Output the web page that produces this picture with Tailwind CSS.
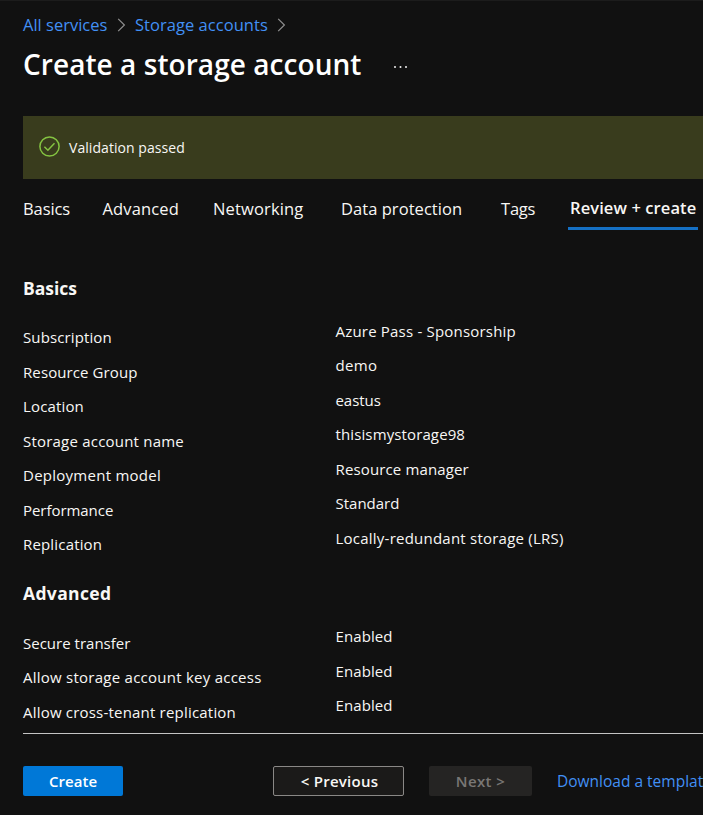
<!DOCTYPE html>
<html lang="en">
<head>
<meta charset="utf-8">
<title>Create a storage account</title>
<script src="https://cdn.jsdelivr.net/npm/@tailwindcss/browser@4"></script>
</head>
<body class="h-[815px] w-[703px] overflow-hidden border-t border-[#1c1c1c] bg-[#111111] font-['Open_Sans','Noto_Sans',sans-serif] text-[15px] text-[#f8f7f5] whitespace-nowrap">
<div class="flex h-[814px] flex-col pl-[23px]">

  <!-- Breadcrumb -->
  <nav class="mt-[11px] flex h-[25px] items-center text-[16.5px] leading-[25px] tracking-[0px] text-[#4290f5]">
    <a class="w-[94px]">All services</a>
    <svg class="w-[9px]" width="9" height="14" viewBox="0 0 9 14" fill="none" stroke="#8f8f8f" stroke-width="1.2"><path d="M1.2 .8 7.4 7 1.2 13.2"/></svg>
    <a class="w-[151px] pl-[9px] tracking-[0.04px]">Storage accounts</a>
    <svg class="w-[9px]" width="9" height="14" viewBox="0 0 9 14" fill="none" stroke="#8f8f8f" stroke-width="1.2"><path d="M1.2 .8 7.4 7 1.2 13.2"/></svg>
  </nav>

  <!-- Title -->
  <header class="mt-[7px] flex h-[40px] items-center">
    <h1 class="w-[370px] text-[28px] leading-[40px] font-semibold tracking-[0.06px] text-white">Create a storage account</h1>
    <svg width="15" height="4" viewBox="0 0 15 4" class="mt-[5px]" fill="#f0f0f0"><circle cx="2" cy="2" r="1"/><circle cx="7.5" cy="2" r="1"/><circle cx="13" cy="2" r="1"/></svg>
  </header>

  <!-- Validation banner -->
  <div class="mt-[32px] flex h-[63px] items-center bg-[#393c1d] pl-[16px]">
    <svg class="mb-[2px]" width="21" height="21" viewBox="0 0 21 21" fill="none" stroke="#84c341" stroke-width="1.5"><circle cx="10.5" cy="10.5" r="9.6"/><path d="M5.4 10.8 8.9 14.2 15.5 7.2"/></svg>
    <span class="ml-[9px] text-[14px] leading-[20px] tracking-[0.06px]">Validation passed</span>
  </div>

  <!-- Tabs -->
  <div class="flex h-[51px] text-[16.5px] leading-[24px]">
    <span class="mt-[18px] w-[79.5px] tracking-[-0.1px]">Basics</span>
    <span class="mt-[18px] w-[110.5px] tracking-[0.15px]">Advanced</span>
    <span class="mt-[18px] w-[128px] tracking-[0.15px]">Networking</span>
    <span class="mt-[18px] w-[160px] tracking-[0.05px]">Data protection</span>
    <span class="mt-[18px] w-[67px] tracking-[-0.2px]">Tags</span>
    <span class="w-[130px] border-b-[3px] border-[#1570c4] pt-[17px] pl-[2px] font-semibold tracking-[0.1px]">Review + create</span>
  </div>

  <!-- Summary: Basics -->
  <h2 class="mt-[46px] h-[24px] text-[17.5px] leading-[24px] font-bold">Basics</h2>
  <div class="mt-[14px] flex h-[242px] leading-[34.5px]">
    <dl class="w-[312px] pt-[6px]">
      <dt class="tracking-[0.12px]">Subscription</dt>
      <dt class="tracking-[0.1px]">Resource Group</dt>
      <dt class="tracking-[0.15px]">Location</dt>
      <dt class="tracking-[0.21px]">Storage account name</dt>
      <dt class="tracking-[0.26px]">Deployment model</dt>
      <dt class="tracking-[-0.05px]">Performance</dt>
      <dt class="tracking-[0.17px]">Replication</dt>
    </dl>
    <dl class="-mt-[0.4px] pl-[0.5px]">
      <dd class="tracking-[0.2px]">Azure Pass - Sponsorship</dd>
      <dd class="tracking-[0.3px]">demo</dd>
      <dd class="tracking-[-0.05px]">eastus</dd>
      <dd class="tracking-[0.12px]">thisismystorage98</dd>
      <dd class="tracking-[0.14px]">Resource manager</dd>
      <dd class="tracking-[0px]">Standard</dd>
      <dd class="tracking-[0.23px]">Locally-redundant storage (LRS)</dd>
    </dl>
  </div>

  <!-- Summary: Advanced -->
  <h2 class="mt-[25px] h-[24px] text-[17.5px] leading-[24px] font-bold tracking-[0.35px]">Advanced</h2>
  <div class="mt-[14px] flex h-[114px] leading-[34.5px]">
    <dl class="w-[312px] pt-[6.6px]">
      <dt class="tracking-[0.01px]">Secure transfer</dt>
      <dt class="tracking-[0.25px]">Allow storage account key access</dt>
      <dt class="tracking-[0.2px]">Allow cross-tenant replication</dt>
    </dl>
    <dl class="pl-[0.5px] tracking-[0.1px]">
      <dd>Enabled</dd>
      <dd>Enabled</dd>
      <dd>Enabled</dd>
    </dl>
  </div>

  <!-- Footer -->
  <footer class="flex border-t border-[#c4c4c4] pt-[32px] leading-[28px] font-semibold">
    <button class="h-[30px] w-[100px] shrink-0 rounded-[2px] bg-[#0078d7] tracking-[0.05px] text-white">Create</button>
    <button class="ml-[150px] h-[30px] w-[131px] shrink-0 rounded-[2px] border border-[#8a8886] bg-[#1b1a19] pl-[2px] tracking-[0.27px]">&lt; Previous</button>
    <button class="ml-[25px] h-[30px] w-[103px] shrink-0 rounded-[2px] bg-[#252423] tracking-[0.4px] text-[#797775]">Next &gt;</button>
    <a class="ml-[25px] h-[30px] shrink-0 text-[15.5px] leading-[30px] font-normal text-[#4290f5]">Download a templat</a>
  </footer>
</div>
</body>
</html>
